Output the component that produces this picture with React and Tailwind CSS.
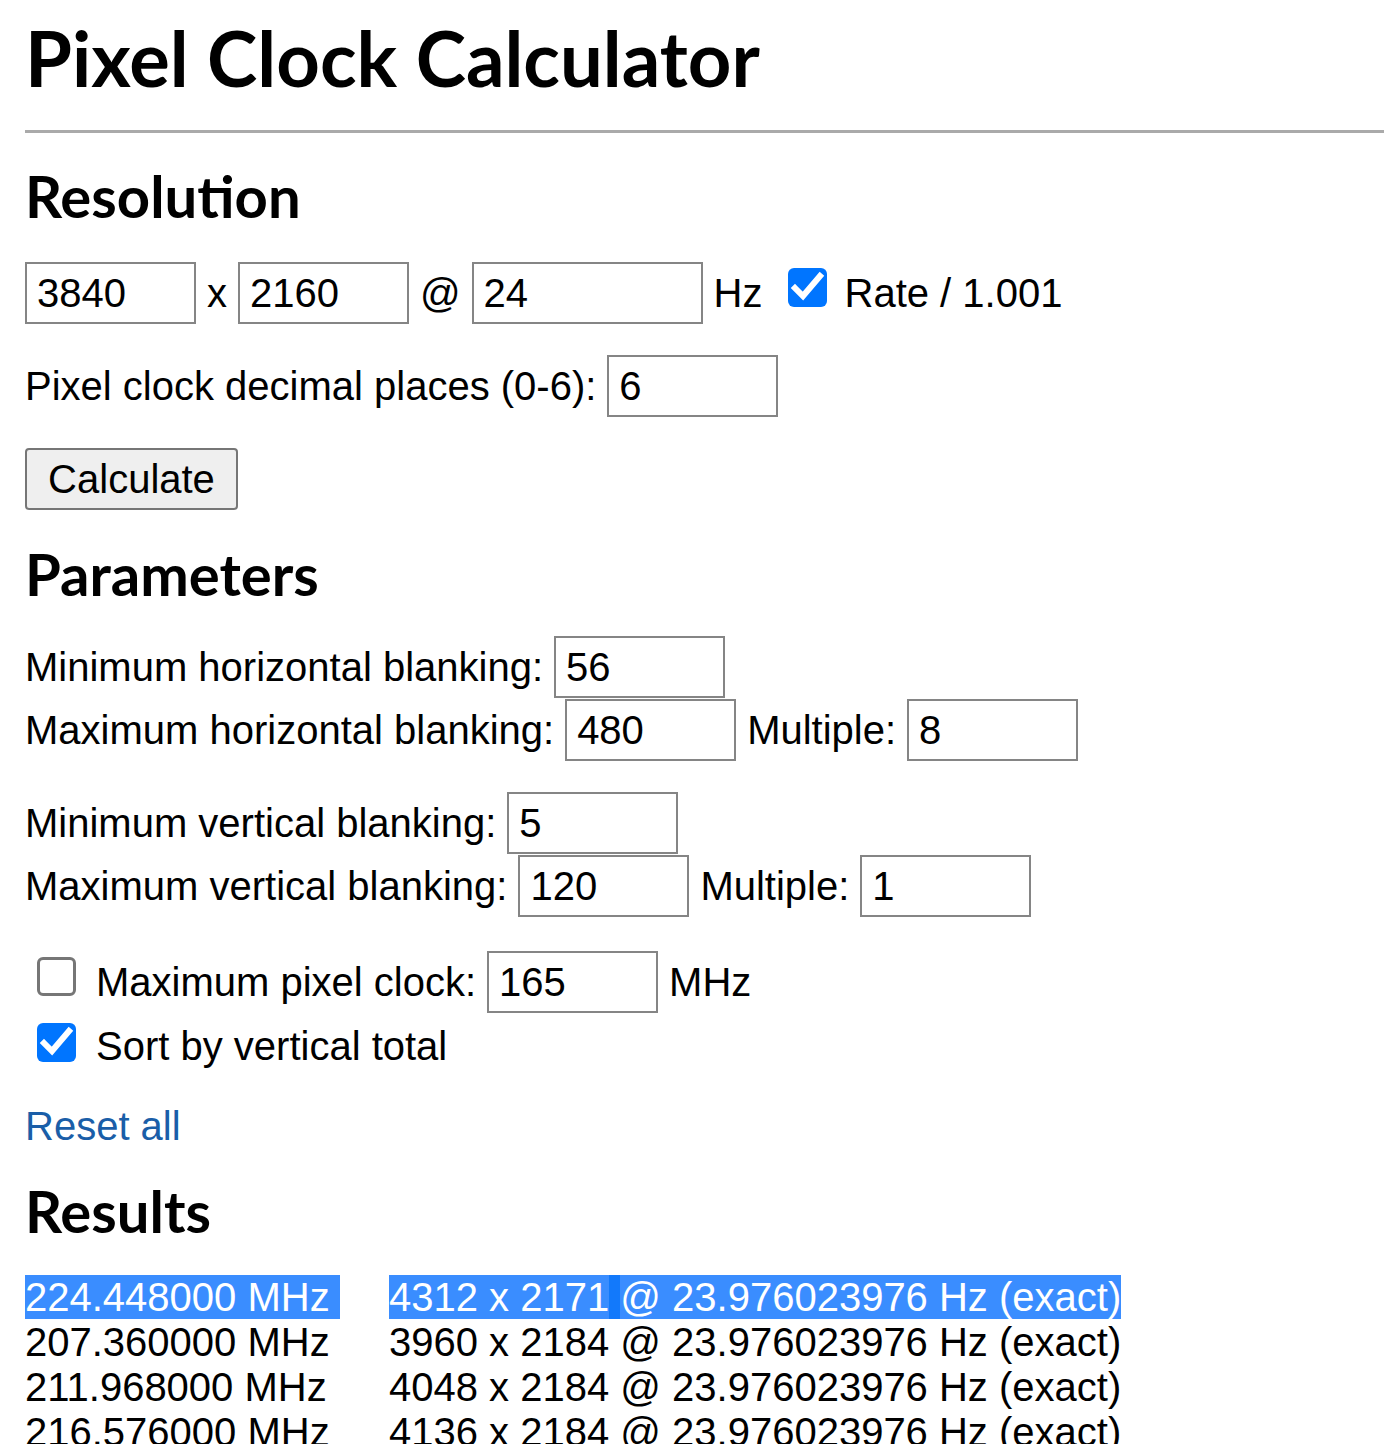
import React from 'react';

const rows = [
  ['224.448000 MHz', '4312 x 2171', '@ 23.976023976 Hz (exact)', true],
  ['207.360000 MHz', '3960 x 2184', '@ 23.976023976 Hz (exact)', false],
  ['211.968000 MHz', '4048 x 2184', '@ 23.976023976 Hz (exact)', false],
  ['216.576000 MHz', '4136 x 2184', '@ 23.976023976 Hz (exact)', false],
];

function Box({ checked, className = '' }) {
  if (checked) {
    return (
      <span className={`flex h-[39px] w-[39px] shrink-0 items-center justify-center rounded-[6px] bg-[#0075ff] ${className}`}>
        <svg viewBox="0 0 39 39" className="h-[39px] w-[39px]">
          <path d="M7 20 L15 28 L32 8" fill="none" stroke="white" strokeWidth="6" strokeLinecap="square" />
        </svg>
      </span>
    );
  }
  return <span className={`block h-[39px] w-[39px] shrink-0 rounded-[6px] border-[3px] border-[#767676] bg-white ${className}`} />;
}

function Field({ value, wide = false }) {
  return (
    <input
      readOnly
      value={value}
      className={`h-[62px] shrink-0 border-2 border-[#858585] bg-white pl-[10px] text-[40px] text-black outline-none ${wide ? 'w-[231px]' : 'w-[171px]'}`}
    />
  );
}

function H2({ children, className = '' }) {
  return (
    <h2 className={`h-[58px] font-['Lato',sans-serif] text-[58px] font-bold leading-[58px] text-black ${className}`}>
      {children}
    </h2>
  );
}

export default function App() {
  return (
    <div className="min-h-[1444px] bg-white pl-[25px] pt-[20px] font-['Liberation_Sans',Arial,sans-serif] text-[40px] leading-[46px] text-black">
      <h1 className="h-[75px] font-['Lato',sans-serif] text-[76px] font-bold leading-[75px]">Pixel Clock Calculator</h1>
      <hr className="mt-[35px] border-0 border-t-[3px] border-[#aaaaaa]" />

      <H2 className="mt-[34px]">Resolution</H2>
      <div className="mt-[37px] flex h-[62px] items-center gap-[11px] whitespace-nowrap">
        <Field value="3840" />
        <span>x</span>
        <Field value="2160" />
        <span>@</span>
        <Field value="24" wide />
        <span>Hz</span>
        <Box checked className="mb-[11px] ml-[14px] mr-[7px]" />
        <span>Rate / 1.001</span>
      </div>
      <div className="mt-[31px] flex h-[62px] items-center gap-[11px] whitespace-nowrap">
        <span>Pixel clock decimal places (0-6):</span>
        <Field value="6" />
      </div>
      <button className="mt-[31px] block h-[62px] w-[213px] rounded-[4px] border-2 border-[#767676] bg-[#efefef] text-[40px] text-black">
        Calculate
      </button>

      <H2 className="mt-[35px]">Parameters</H2>
      <div className="mt-[33px] flex h-[62px] items-center gap-[11px] whitespace-nowrap">
        <span>Minimum horizontal blanking:</span>
        <Field value="56" />
      </div>
      <div className="mt-[1px] flex h-[62px] items-center gap-[11px] whitespace-nowrap">
        <span>Maximum horizontal blanking:</span>
        <Field value="480" />
        <span>Multiple:</span>
        <Field value="8" />
      </div>
      <div className="mt-[31px] flex h-[62px] items-center gap-[11px] whitespace-nowrap">
        <span>Minimum vertical blanking:</span>
        <Field value="5" />
      </div>
      <div className="mt-[1px] flex h-[62px] items-center gap-[11px] whitespace-nowrap">
        <span>Maximum vertical blanking:</span>
        <Field value="120" />
        <span>Multiple:</span>
        <Field value="1" />
      </div>
      <div className="mt-[34px] flex h-[62px] items-center gap-[11px] whitespace-nowrap">
        <Box className="mb-[12px] ml-[12px] mr-[9px]" />
        <span>Maximum pixel clock:</span>
        <Field value="165" />
        <span>MHz</span>
      </div>
      <div className="mt-[10px] flex h-[46px] items-center gap-[11px] whitespace-nowrap">
        <Box checked className="mb-[8px] ml-[12px] mr-[9px]" />
        <span>Sort by vertical total</span>
      </div>
      <div className="mt-[34px] h-[46px]">
        <a href="#" className="text-[#1a5ea8]">Reset all</a>
      </div>

      <H2 className="mt-[33px]">Results</H2>
      <div className="mt-[35px] leading-[45px]">
        {rows.map(([clock, size, rate, selected]) => (
          <div key={clock} className="flex whitespace-pre">
            <div className="w-[364px] shrink-0">
              <span className={selected ? 'bg-[#3a8dff] pr-[10px] text-white' : ''}>{clock}</span>
            </div>
            <div>
              <span className={selected ? 'bg-[#3a8dff] text-white' : ''}>{size}</span>
              <span className={selected ? 'bg-[#1279fb] text-white' : ''}>{' '}</span>
              <span className={selected ? 'bg-[#3a8dff] text-white' : ''}>{rate}</span>
            </div>
          </div>
        ))}
      </div>
    </div>
  );
}
